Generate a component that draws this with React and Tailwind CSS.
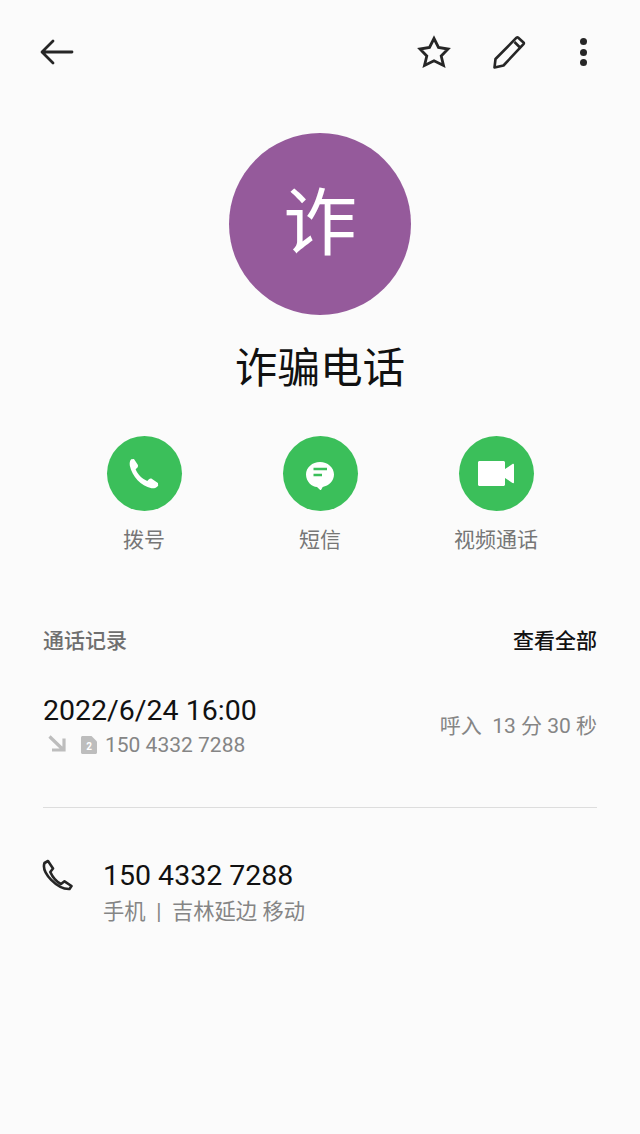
const F = { fontFamily: '"Roboto","Noto Sans CJK SC",sans-serif' };
const Action = ({ label, children }) => (
  <div className="flex w-[120px] flex-col items-center">
    <div className="flex h-[75px] w-[75px] items-center justify-center rounded-full bg-[#3bbf5a]">{children}</div>
    <div className="mt-[15px] text-[21px] leading-[28px] text-[#767676]">{label}</div>
  </div>
);
export default function App() {
  return (
    <div style={F} className="flex h-[1134px] w-[640px] flex-col overflow-hidden bg-[#fbfbfb]">
      <div className="flex h-[104px] items-start justify-between pl-[40px] pr-[53px] pt-[34px]">
        <svg width="34" height="36" viewBox="0 0 34 36" fill="none" stroke="#262626" strokeWidth="2.8" strokeLinecap="round" strokeLinejoin="round"><path d="M32 18H3M13 7 2 18l11 11" /></svg>
        <div className="flex items-center">
          <svg width="36" height="36" viewBox="0 0 36 36" fill="none" stroke="#262626" strokeWidth="2.8" strokeLinejoin="miter"><path d="M18 4.500 22.500 13.500 32 15 25.200 22 27.500 31.500 18 26.800 8.500 31.500 10.800 22 4 15 13.500 13.500Z" /></svg>
          <svg className="ml-[39px]" width="36" height="36" viewBox="0 0 36 36" fill="none" stroke="#262626" strokeWidth="2.6" strokeLinejoin="round"><path d="M27 3.500l5.500 5c.5.500.5 1 0 1.600L12.500 31.500 3.500 33.500l1-8.500L25.500 3.700c.5-.4 1-.6 1.500-.2ZM23.500 8l5.500 5.500" /></svg>
          <div className="ml-[53px] flex h-[28px] w-[7px] flex-col items-center justify-between">
            <span className="h-[7px] w-[7px] rounded-full bg-[#262626]" />
            <span className="h-[7px] w-[7px] rounded-full bg-[#262626]" />
            <span className="h-[7px] w-[7px] rounded-full bg-[#262626]" />
          </div>
        </div>
      </div>
      <div className="mt-[29px] flex flex-col items-center">
        <div className="flex h-[182px] w-[182px] items-center justify-center rounded-full bg-[#955a9b] text-[74px] leading-none text-white">诈</div>
        <div className="mt-[27px] text-[42.6px] font-normal leading-[52px] text-[#111]">诈骗电话</div>
      </div>
      <div className="mt-[42px] flex justify-between px-[84px]">
        <Action label="拨号">
          <svg width="31" height="30" viewBox="3 3 27 27" fill="#fff"><path d="M4.500 3.300 7 3.100 10.300 8c.6.900.5 2-.3 2.800l-1.500 1.500c1.500 4.300 6 8.800 10.500 10.500l1.500-1.500c.8-.8 1.900-.9 2.800-.3l5.300 3.500.2 2.600c-1.200 1.800-4 2.600-6 2.200C13.200 27 5.500 19 3.300 9 2.900 6.800 3.300 4.500 4.500 3.300Z" /></svg>
        </Action>
        <Action label="短信">
          <svg className="mt-[4px]" width="28" height="28" viewBox="0 0 28 28" fill="none"><path fill="#fff" d="M14 0C6.300 0 0 5.500 0 12.500S6 25 11 25l3.200 3c.3.200.6.200.8-.1l1.700-3C22.800 24 28 19 28 12.500 28 5.500 21.700 0 14 0Z" /><path stroke="#3bbf5a" strokeWidth="2.300" d="M7.500 7H21M7.500 13H16" /></svg>
        </Action>
        <Action label="视频通话">
          <svg width="36" height="25" viewBox="0 0 36 25" fill="#fff"><path d="M1.500 0h24c.8 0 1.500.7 1.500 1.500v6.500l7.500-5c.6-.4 1.500 0 1.500.8v17.400c0 .8-.9 1.200-1.500.8L27 17v6.500c0 .8-.7 1.500-1.500 1.500h-24C.7 25 0 24.300 0 23.500v-22C0 .7.700 0 1.500 0Z" /></svg>
        </Action>
      </div>
      <div className="mt-[73px] flex items-center justify-between px-[43px]">
        <span className="text-[21px] font-medium leading-[28px] text-[#6f6f6f]">通话记录</span>
        <span className="text-[21px] font-medium leading-[28px] text-[#111]">查看全部</span>
      </div>
      <div className="mx-[43px] mt-[38px] flex items-center justify-between border-b border-[#dddddd] pb-[48px]">
        <div>
          <div className="text-[28.5px] leading-[36px] text-[#111]">2022/6/24 16:00</div>
          <div className="mt-[2px] flex items-center text-[21px] leading-[28px] text-[#858585]">
            <svg className="mb-[3px] ml-[5px]" width="18" height="17" viewBox="0 0 18 17" fill="none" stroke="#bdbdbd" strokeWidth="3.2"><path d="M1.500 1.500 15 14.500M16 3.500V15H4" /></svg>
            <svg className="ml-[15px]" width="16" height="18" viewBox="0 0 16 18"><path fill="#bdbdbd" d="M1.500 0H10.500L16 5.500V16.500c0 .8-.7 1.500-1.500 1.500h-13C.7 18 0 17.300 0 16.500v-15C0 .7.700 0 1.500 0Z" /><text x="8" y="14" textAnchor="middle" fontSize="10" fontWeight="700" fill="#fff">2</text></svg>
            <span className="ml-[8px]">150 4332 7288</span>
          </div>
        </div>
        <div className="text-[21px] leading-[28px] text-[#858585]">呼入&nbsp; 13 分 30 秒</div>
      </div>
      <div className="mt-[50px] flex items-start px-[42px]">
        <svg className="mt-[1px]" width="31" height="32" viewBox="0 0 31 32" fill="none" stroke="#262626" strokeWidth="2.6" strokeLinejoin="round"><path d="M2.500 4 6 2 11 9.500 8.300 13C10.500 18 14 22.500 19 25L22.500 22.300 29.500 27 27.500 30C15.500 30.500 -1 14 2.500 4Z" /></svg>
        <div className="ml-[30px]">
          <div className="text-[28.5px] leading-[36px] text-[#111]">150 4332 7288</div>
          <div className="mt-[4px] whitespace-pre text-[21.3px] leading-[28px] text-[#858585]">手机  |  吉林延边 移动</div>
        </div>
      </div>
    </div>
  );
}
